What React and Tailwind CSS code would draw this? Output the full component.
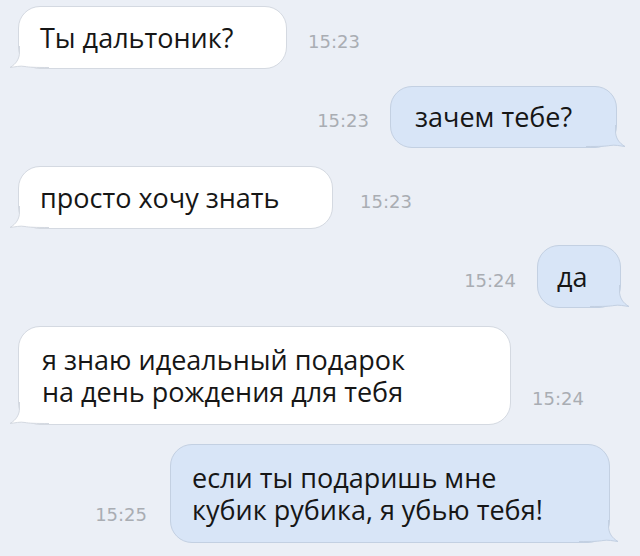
import React from "react";

const FONT = { fontFamily: '"Open Sans", "Noto Sans", sans-serif' };
const TS_FONT = { fontFamily: '"DejaVu Sans", "Liberation Sans", sans-serif' };

function Tail({ out }) {
  const fill = out ? "#d8e5f7" : "#ffffff";
  const stroke = out ? "#c3d0e2" : "#d4d9e1";
  const edge =
    "M10.5 0 L10.5 6 C10.5 13 7 18 1 21.5 C6 21 11 19.5 16 20.5 C20 21.3 26 21.5 40 21.5";
  return (
    <svg
      width="40"
      height="22"
      viewBox="0 0 40 22"
      className={
        out
          ? "absolute right-[-10px] bottom-0 -scale-x-100 overflow-visible"
          : "absolute left-[-10px] bottom-0 overflow-visible"
      }
    >
      <path d={edge + " L40 0 Z"} fill={fill} />
      <path d={edge} fill="none" stroke={stroke} strokeWidth="1" />
    </svg>
  );
}

function Bubble({ out, className, children }) {
  return (
    <div
      className={
        "relative flex items-center rounded-[22px] border text-[27px] leading-[32px] text-[#161616] " +
        (out ? "bg-[#d8e5f7] border-[#c3d0e2] " : "bg-white border-[#d4d9e1] ") +
        className
      }
      style={FONT}
    >
      <div className="relative z-10">{children}</div>
      <Tail out={out} />
    </div>
  );
}

function Time({ children, className }) {
  return (
    <div
      className={"text-[18px] leading-[21px] text-[#a9adb3] " + className}
      style={TS_FONT}
    >
      {children}
    </div>
  );
}

export default function App() {
  return (
    <div className="w-[640px] h-[556px] overflow-hidden bg-[#ebeff6] flex flex-col">
      <div className="flex items-center pl-[18px] mt-[6px]">
        <Bubble className="w-[269px] h-[63px] pl-[21px]">Ты дальтоник?</Bubble>
        <Time className="ml-[21px] mt-[7px]">15:23</Time>
      </div>

      <div className="flex items-center justify-end pr-[23px] mt-[17px]">
        <Time className="mr-[21px] mt-[7px]">15:23</Time>
        <Bubble out className="w-[227px] h-[62px] pl-[24px]">зачем тебе?</Bubble>
      </div>

      <div className="flex items-center pl-[18px] mt-[18px]">
        <Bubble className="w-[315px] h-[63px] pl-[21px]">просто хочу знать</Bubble>
        <Time className="ml-[27px] mt-[7px]">15:23</Time>
      </div>

      <div className="flex items-center justify-end pr-[19px] mt-[16px]">
        <Time className="mr-[21px] mt-[7px]">15:24</Time>
        <Bubble out className="w-[84px] h-[63px] pl-[19px]">да</Bubble>
      </div>

      <div className="flex items-end pl-[18px] mt-[18px]">
        <Bubble className="w-[493px] h-[99px] pl-[23px]">
          я знаю идеальный подарок
          <br />
          на день рождения для тебя
        </Bubble>
        <Time className="ml-[21px] mb-[16px]">15:24</Time>
      </div>

      <div className="flex items-end justify-end pr-[30px] mt-[19px]">
        <Time className="mr-[23px] mb-[18px]">15:25</Time>
        <Bubble out className="w-[440px] h-[99px] pl-[21px]">
          если ты подаришь мне
          <br />
          кубик рубика, я убью тебя!
        </Bubble>
      </div>
    </div>
  );
}
